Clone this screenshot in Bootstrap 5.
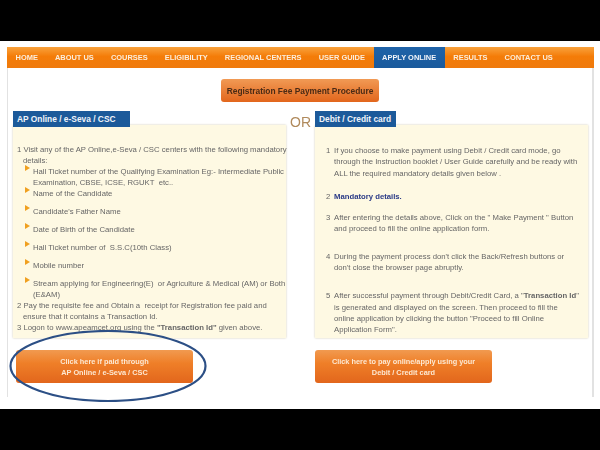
<!DOCTYPE html>
<html lang="en">
<head>
<meta charset="utf-8">
<title>Apply Online</title>
<link href="https://cdn.jsdelivr.net/npm/bootstrap@5.3.0/dist/css/bootstrap.min.css" rel="stylesheet">
<style>
html,body{height:450px;overflow:hidden;background:#000;}
body{padding-top:41px;font-family:"Liberation Sans",Arial,sans-serif;}
.stage{position:relative;width:600px;height:368px;background:#fff;padding:6px 6px 0 7px;}
.frame{height:350px;border:solid #e2e2e2;border-width:0 2px 0 1px;filter:blur(.35px);}
.menu{height:21px;background:linear-gradient(#f9a23c,#f47c08 45%,#ef7a0c);margin:0 -2px 0 -1px;}
.menu-link{display:flex;align-items:center;height:21px;padding:0 8.55px;color:#fbeedd;font:bold 7.45px "Liberation Sans",sans-serif;text-decoration:none;white-space:nowrap;}
.menu-link.on{background:linear-gradient(#1f63a8,#1a5a9c);color:#f2f5fa;}
.feebtn{width:158px;height:23px;margin:11px auto 9px;background:linear-gradient(#f19a55,#e2661c);border-radius:3px;color:#4a2a15;font:bold 8.4px "Liberation Sans",sans-serif;display:flex;align-items:center;justify-content:center;}
.cols{padding-left:5px;}
.pane{width:273px;}
.tab{position:relative;z-index:1;height:16px;background:#1c5a9a;color:#f0f4fa;font:bold 8.4px "Liberation Sans",sans-serif;display:flex;align-items:center;padding:0 4px;}
.tabwide{width:117px;}
.tabshort{width:81px;}
.box{position:relative;height:213px;margin-top:-2px;background:#fef9e3;box-shadow:0 0 2px #cfcab4;color:#666;font-size:7.72px;line-height:11px;}
.leftbox{padding:19px 0 0 4px;}
.rightbox{padding:20px 8px 0 11px;line-height:11.3px;}
.ortext{width:29px;color:#b08a5c;font-size:14px;line-height:16px;padding-top:3px;text-align:center;}
.step{padding-left:6px;text-indent:-6px;margin-right:-3px;}
.sub{margin:0;padding:0 0 0 16px;list-style:none;}
.sub li{position:relative;margin-bottom:7px;}
.sub li.tight{margin-bottom:0;}
.sub li::before{content:"";position:absolute;left:-8px;top:-1px;border-left:5px solid #f0a020;border-top:3px solid transparent;border-bottom:3px solid transparent;}
.rstep{display:flex;gap:4px;}
.rnum{width:4px;flex:none;}
.gap-a{margin-bottom:12px;}
.gap-b{margin-bottom:10px;}
.gap-c{margin-bottom:16px;}
.gap-d{margin-bottom:17px;}
.cta{width:177px;height:33px;margin-top:12px;background:linear-gradient(#f19a50,#ef7f28 40%,#e2661c);border-radius:3px;color:#fde8d2;font:bold 7.35px/11px "Liberation Sans",sans-serif;display:flex;align-items:center;justify-content:center;text-align:center;}
.ctaleft{margin-left:3px;}
.ringmark{position:absolute;left:9px;top:289px;pointer-events:none;}
.navy{color:#2a3a86;}
</style>
</head>
<body>
<div class="stage">
<div class="frame">
  <nav class="menu d-flex">
    <a class="menu-link" href="#">HOME</a>
    <a class="menu-link" href="#">ABOUT US</a>
    <a class="menu-link" href="#">COURSES</a>
    <a class="menu-link" href="#">ELIGIBILITY</a>
    <a class="menu-link" href="#">REGIONAL CENTERS</a>
    <a class="menu-link" href="#">USER GUIDE</a>
    <a class="menu-link on" href="#">APPLY ONLINE</a>
    <a class="menu-link" href="#">RESULTS</a>
    <a class="menu-link" href="#">CONTACT US</a>
  </nav>
  <div class="feebtn">Registration Fee Payment Procedure</div>
  <div class="cols d-flex">
    <div class="pane">
      <div class="tab tabwide">AP Online / e-Seva / CSC</div>
      <div class="box leftbox">
        <div class="step">1 Visit any of the AP Online,e-Seva / CSC centers with the following mandatory details:</div>
        <ul class="sub">
          <li class="tight">Hall Ticket number of the Qualifying Examination Eg:- Intermediate Public Examination, CBSE, ICSE, RGUKT&nbsp; etc..</li>
          <li>Name of the Candidate</li>
          <li>Candidate's Father Name</li>
          <li>Date of Birth of the Candidate</li>
          <li>Hall Ticket number of&nbsp; S.S.C(10th Class)</li>
          <li>Mobile number</li>
          <li class="tight">Stream applying for Engineering(E)&nbsp; or Agriculture &amp; Medical (AM) or Both (E&amp;AM)</li>
        </ul>
        <div class="step">2 Pay the requisite fee and Obtain a&nbsp; receipt for Registration fee paid and ensure that it contains a Transaction Id.</div>
        <div class="step">3 Logon to www.apeamcet.org using the <b>"Transaction Id"</b> given above.</div>
      </div>
      <div class="cta ctaleft">Click here if paid through<br>AP Online / e-Seva / CSC</div>
    </div>
    <div class="ortext">OR</div>
    <div class="pane">
      <div class="tab tabshort">Debit / Credit card</div>
      <div class="box rightbox">
        <div class="rstep gap-a"><span class="rnum">1</span><span>If you choose to make payment using Debit / Credit card mode, go through the Instruction booklet / User Guide carefully and be ready with ALL the required mandatory details given below .</span></div>
        <div class="rstep gap-b"><span class="rnum">2</span><b class="navy">Mandatory details.</b></div>
        <div class="rstep gap-c"><span class="rnum">3</span><span>After entering the details above, Click on the " Make Payment " Button and proceed to fill the online application form.</span></div>
        <div class="rstep gap-d"><span class="rnum">4</span><span>During the payment process don't click the Back/Refresh buttons or don't close the browser page abruptly.</span></div>
        <div class="rstep"><span class="rnum">5</span><span>After successful payment through Debit/Credit Card, a "<b>Transaction Id</b>" is generated and displayed on the screen. Then proceed to fill the online application by clicking the button "Proceed to fill Online Application Form".</span></div>
      </div>
      <div class="cta">Click here to pay online/apply using your<br>Debit / Credit card</div>
    </div>
  </div>
</div>
<svg class="ringmark" width="200" height="72" viewBox="0 0 200 72"><ellipse cx="99" cy="36" rx="97.5" ry="35" fill="none" stroke="#2c4f85" stroke-width="2.2"/></svg>
</div>
<script src="https://cdn.jsdelivr.net/npm/bootstrap@5.3.0/dist/js/bootstrap.bundle.min.js"></script>
</body>
</html>
